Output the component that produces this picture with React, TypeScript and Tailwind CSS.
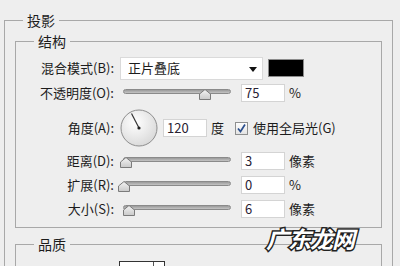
import React from "react";

function Slider({ thumb }: { thumb: string }) {
  return (
    <div className="relative ml-[3px] h-[14px] w-[108px] shrink-0">
      <div className="absolute left-0 right-0 top-[3px] h-[5px] rounded-full border border-[#8a8a8a] bg-gradient-to-b from-[#9a9a9a] to-[#c4c4c4]" />
      <svg className={`absolute top-[3px] ${thumb}`} width="12" height="11" viewBox="0 0 12 11">
        <defs>
          <linearGradient id="th" x1="0" y1="0" x2="0" y2="1">
            <stop offset="0" stopColor="#f4f4f4" />
            <stop offset="1" stopColor="#c9c9c9" />
          </linearGradient>
        </defs>
        <path d="M6 0.5 L11.5 5 V10.5 H0.5 V5 Z" fill="url(#th)" stroke="#7b7b7b" strokeLinejoin="round" />
      </svg>
    </div>
  );
}

function Field({ value, className = "" }: { value: string; className?: string }) {
  return (
    <div className={`flex h-[18px] w-[44px] shrink-0 items-center border border-[#d4d4d4] bg-white pl-[3px] text-[13px] text-[#2a2233] ${className}`}>
      {value}
    </div>
  );
}

function Label({ children }: { children: React.ReactNode }) {
  return <div className="w-[99px] shrink-0 pr-[1px] text-right">{children}</div>;
}

function SliderRow({ label, thumb, value, unit, className }: { label: string; thumb: string; value: string; unit: string; className: string }) {
  return (
    <div className={`flex h-[18px] items-center ${className}`}>
      <Label>{label}</Label>
      <div className="ml-[5px] flex items-center">
        <Slider thumb={thumb} />
        <Field value={value} className="ml-[10px]" />
        <span className="ml-[4px]">{unit}</span>
      </div>
    </div>
  );
}

export default function App() {
  return (
    <div className="relative h-[266px] w-[400px] overflow-hidden bg-[#eeeeee] pt-[11px] font-['Noto_Sans_CJK_SC',sans-serif] text-[13px] leading-[18px] text-[#1c1c1c]">
      <fieldset className="ml-[4px] w-[389px] border border-[#a8a8a8] pb-[40px]">
        <legend className="ml-[18px] px-[4px] text-[14px]">投影</legend>

        {/* 结构 */}
        <fieldset className="ml-[10px] mt-[3px] w-[367px] border border-[#a8a8a8] pb-[9px]">
          <legend className="ml-[18px] px-[4px] text-[14px]">结构</legend>

          <div className="mt-[6px] flex h-[24px] items-center">
            <Label>混合模式(B):</Label>
            <div className="relative ml-[5px] flex h-[23px] w-[143px] items-center border border-[#dadada] bg-white pl-[7px]">
              正片叠底
              <svg className="absolute right-[5px] top-[9px]" width="8" height="5" viewBox="0 0 8 5">
                <path d="M0 0 H8 L4 5 Z" fill="#111" />
              </svg>
            </div>
            <div className="ml-[5px] h-[18px] w-[36px] border border-[#8c8c8c] bg-black" />
          </div>

          <SliderRow label="不透明度(O):" thumb="left-[76px]" value="75" unit="%" className="mt-[4px]" />

          <div className="mt-[7px] flex h-[38px] items-center">
            <Label>角度(A):</Label>
            <svg className="ml-[5px] shrink-0" width="38" height="38" viewBox="0 0 38 38">
              <defs>
                <radialGradient id="dial" cx="0.4" cy="0.35" r="0.7">
                  <stop offset="0" stopColor="#ffffff" />
                  <stop offset="1" stopColor="#d8d8d8" />
                </radialGradient>
              </defs>
              <circle cx="19" cy="19" r="18" fill="url(#dial)" stroke="#8e8e8e" />
              <line x1="19" y1="19" x2="11.5" y2="4.5" stroke="#333" strokeWidth="1.2" />
              <circle cx="19" cy="19" r="1.6" fill="#222" />
            </svg>
            <Field value="120" className="ml-[5px]" />
            <span className="ml-[4px]">度</span>
            <div className="ml-[11px] flex h-[13px] w-[13px] items-center justify-center border border-[#8e8f8f] bg-gradient-to-b from-[#fdfdfd] to-[#e4e4e4]">
              <svg width="11" height="11" viewBox="0 0 11 11">
                <path d="M2 5.5 L4.5 8.5 L9 1.5" fill="none" stroke="#2b4f8e" strokeWidth="1.7" />
              </svg>
            </div>
            <span className="ml-[5px]">使用全局光(G)</span>
          </div>

          <SliderRow label="距离(D):" thumb="left-[-3px]" value="3" unit="像素" className="mt-[5px]" />
          <SliderRow label="扩展(R):" thumb="left-[-5px]" value="0" unit="%" className="mt-[6px]" />
          <SliderRow label="大小(S):" thumb="left-[0px]" value="6" unit="像素" className="mt-[6px]" />
        </fieldset>

        {/* 品质 */}
        <fieldset className="ml-[10px] mt-[7px] w-[367px] border border-[#a8a8a8] pb-[20px]">
          <legend className="ml-[18px] px-[4px] text-[14px]">品质</legend>
          <div className="ml-[103px] mt-[8px] flex h-[30px] w-[46px] justify-end border border-[#333] bg-white pr-[10px]">
            <div className="h-[8px] w-[1px] bg-[#555]" />
          </div>
        </fieldset>
      </fieldset>

      {/* watermark */}
      <div className="absolute left-[266px] top-[226px] text-[23px] font-bold italic leading-[24px] tracking-[-1px] text-white [-webkit-text-stroke:3px_#222] [paint-order:stroke_fill]">
        广东龙网
      </div>
    </div>
  );
}
